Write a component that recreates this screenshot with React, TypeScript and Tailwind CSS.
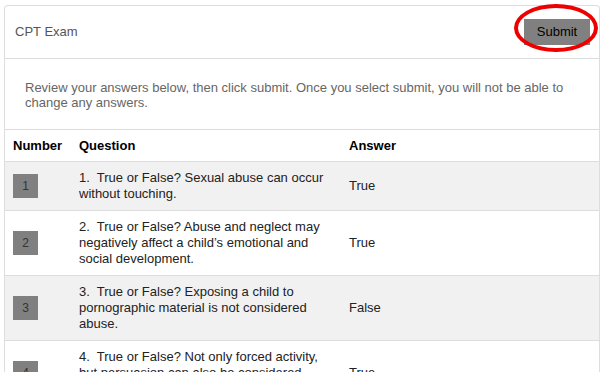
import React from "react";

type Row = {
  num: number;
  question: string;
  answer: string;
};

const rows: Row[] = [
  { num: 1, question: "1.\u00a0 True or False? Sexual abuse can occur without touching.", answer: "True" },
  {
    num: 2,
    question: "2.\u00a0 True or False? Abuse and neglect may negatively affect a child\u2019s emotional and social development.",
    answer: "True",
  },
  {
    num: 3,
    question: "3.\u00a0 True or False? Exposing a child to pornographic material is not considered abuse.",
    answer: "False",
  },
  {
    num: 4,
    question: "4.\u00a0 True or False? Not only forced activity, but persuasion can also be considered sexual abuse.",
    answer: "True",
  },
];

export default function App() {
  return (
    <div
      className="relative w-[605px] h-[372px] overflow-hidden bg-white"
      style={{ fontFamily: '"Liberation Sans", Arial, sans-serif' }}
    >
      <div className="ml-[4px] mt-[5px] w-[596px] border border-b-0 border-[#dddddd] rounded-t-[4px]">
        {/* header */}
        <div className="flex h-[53px] items-center justify-between border-b border-[#dddddd] pl-[10px] pr-[9px]">
          <span className="text-[13px] text-[#555555]">CPT Exam</span>
          <button className="h-[26px] w-[66px] bg-[#808080] text-[13px] text-black">Submit</button>
        </div>

        {/* intro */}
        <div className="px-[20px] pt-[21px] pb-[19px] text-[13px] leading-[15px] text-[#666666]">
          Review your answers below, then click submit. Once you select submit, you will not be able to change
          any answers.
        </div>

        {/* answers table */}
        <table className="w-full table-fixed border-collapse text-[13px] text-[#222222]">
          <colgroup>
            <col className="w-[66px]" />
            <col className="w-[270px]" />
            <col />
          </colgroup>
          <thead>
            <tr className="border-t border-b border-[#dddddd]">
              <th className="px-[8px] py-[8px] text-left font-bold leading-[15px] text-black">Number</th>
              <th className="px-[8px] py-[8px] text-left font-bold leading-[15px] text-black">Question</th>
              <th className="px-[8px] py-[8px] text-left font-bold leading-[15px] text-black">Answer</th>
            </tr>
          </thead>
          <tbody>
            {rows.map((r, i) => (
              <tr key={r.num} className={`border-b border-[#dddddd] ${i % 2 === 0 ? "bg-[#f1f1f1]" : "bg-white"}`}>
                <td className="px-[8px] py-[8px] align-middle">
                  <div className="flex h-[24px] w-[25px] items-center justify-center bg-[#808080] text-[12px] text-[#333333]">
                    {r.num}
                  </div>
                </td>
                <td className="px-[8px] py-[8px] align-middle leading-[16px]">{r.question}</td>
                <td className="px-[8px] py-[8px] align-middle leading-[16px]">{r.answer}</td>
              </tr>
            ))}
          </tbody>
        </table>
      </div>

      {/* red circle annotation around submit */}
      <div className="pointer-events-none absolute left-[514px] top-[4px] h-[48px] w-[84px] rounded-[50%] border-[4px] border-[#ee0000]" />
    </div>
  );
}
